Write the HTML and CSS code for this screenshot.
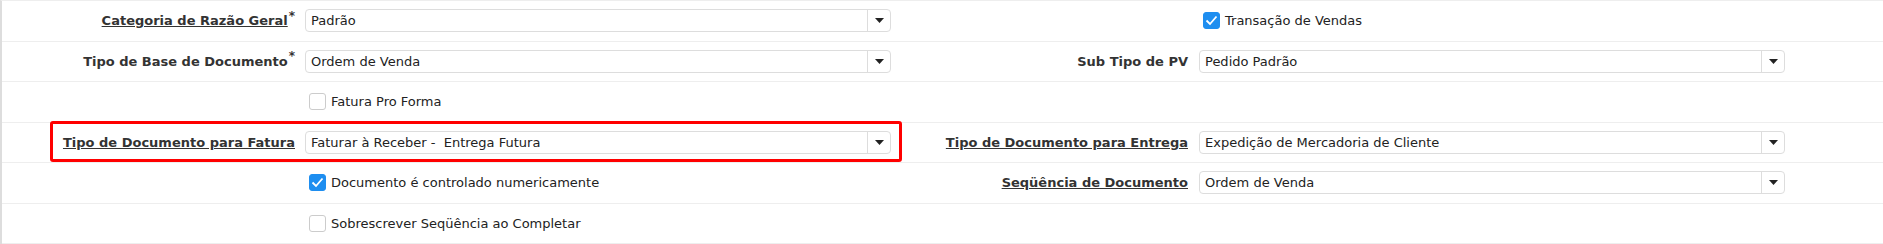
FILE: index.html
```html
<!DOCTYPE html>
<html lang="pt">

<head>
    <meta charset="UTF-8">
    <meta name="viewport" content="width=device-width, initial-scale=1.0">
    <title>Tipo de Documento de Vendas</title>
    <link rel="stylesheet" href="styles.css">
</head>

<body>
    <div class="form">
        <!-- linha 1 -->
        <div class="row">
            <div class="lbl"><span class="link">Categoria de Razão Geral</span><sup>*</sup></div>
            <div class="field">
                <div class="select"><span class="value">Padrão</span><span class="btn"><svg width="9" height="5" viewBox="0 0 9 5"><path d="M0 0h9L4.5 5z" fill="#222"/></svg></span></div>
            </div>
            <div class="lbl"></div>
            <div class="field">
                <label class="check"><span class="box on"><svg width="13" height="11" viewBox="0 0 13 11"><path d="M1.5 5.5l3.5 3.5 6.5-7.5" fill="none" stroke="#fff" stroke-width="1.8"/></svg></span>Transação de Vendas</label>
            </div>
        </div>

        <!-- linha 2 -->
        <div class="row">
            <div class="lbl">Tipo de Base de Documento<sup>*</sup></div>
            <div class="field">
                <div class="select"><span class="value">Ordem de Venda</span><span class="btn"><svg width="9" height="5" viewBox="0 0 9 5"><path d="M0 0h9L4.5 5z" fill="#222"/></svg></span></div>
            </div>
            <div class="lbl lbl-right">Sub Tipo de PV</div>
            <div class="field">
                <div class="select"><span class="value">Pedido Padrão</span><span class="btn"><svg width="9" height="5" viewBox="0 0 9 5"><path d="M0 0h9L4.5 5z" fill="#222"/></svg></span></div>
            </div>
        </div>

        <!-- linha 3 -->
        <div class="row">
            <div class="lbl"></div>
            <div class="field">
                <label class="check"><span class="box"></span>Fatura Pro Forma</label>
            </div>
            <div class="lbl"></div>
            <div class="field"></div>
        </div>

        <!-- linha 4 (destacada) -->
        <div class="row marked">
            <div class="highlight"></div>
            <div class="lbl"><span class="link">Tipo de Documento para Fatura</span></div>
            <div class="field">
                <div class="select"><span class="value">Faturar à Receber -&nbsp; Entrega Futura</span><span class="btn"><svg width="9" height="5" viewBox="0 0 9 5"><path d="M0 0h9L4.5 5z" fill="#222"/></svg></span></div>
            </div>
            <div class="lbl lbl-right"><span class="link">Tipo de Documento para Entrega</span></div>
            <div class="field">
                <div class="select"><span class="value">Expedição de Mercadoria de Cliente</span><span class="btn"><svg width="9" height="5" viewBox="0 0 9 5"><path d="M0 0h9L4.5 5z" fill="#222"/></svg></span></div>
            </div>
        </div>

        <!-- linha 5 -->
        <div class="row">
            <div class="lbl"></div>
            <div class="field">
                <label class="check"><span class="box on"><svg width="13" height="11" viewBox="0 0 13 11"><path d="M1.5 5.5l3.5 3.5 6.5-7.5" fill="none" stroke="#fff" stroke-width="1.8"/></svg></span>Documento é controlado numericamente</label>
            </div>
            <div class="lbl lbl-right"><span class="link">Seqüência de Documento</span></div>
            <div class="field">
                <div class="select"><span class="value">Ordem de Venda</span><span class="btn"><svg width="9" height="5" viewBox="0 0 9 5"><path d="M0 0h9L4.5 5z" fill="#222"/></svg></span></div>
            </div>
        </div>

        <!-- linha 6 -->
        <div class="row">
            <div class="lbl"></div>
            <div class="field">
                <label class="check"><span class="box"></span>Sobrescrever Seqüência ao Completar</label>
            </div>
            <div class="lbl"></div>
            <div class="field"></div>
        </div>
    </div>
</body>

</html>
```

FILE: styles.css
```css
body {
    margin: 0;
    padding: 0;
    background-color: #fff;
    font-family: "DejaVu Sans", Verdana, sans-serif;
    font-size: 13px;
    color: #333;
}

.form {
    border-left: 2px solid #ddd;
    border-top: 1px solid #eee;
}

.row {
    position: relative;
    display: grid;
    grid-template-columns: 303px 586px 308px 586px 1fr;
    align-items: center;
    min-height: 39.5px;
    border-bottom: 1px solid #eee;
}

.lbl {
    font-weight: bold;
    text-align: right;
    padding-right: 10px;
    white-space: nowrap;
}

.lbl-right {
    padding-right: 11px;
}

.lbl .link {
    text-decoration: underline;
}

.lbl sup {
    font-size: 12px;
    line-height: 0;
    margin-left: 1px;
}

.select {
    display: flex;
    align-items: stretch;
    height: 21px;
    border: 1px solid #ddd;
    border-radius: 4px;
    background-color: #fff;
}

.select .value {
    flex: 1;
    padding-left: 5px;
    line-height: 21px;
    color: #222;
    white-space: nowrap;
    overflow: hidden;
}

.select .btn {
    width: 22px;
    border-left: 1px solid #ddd;
    display: flex;
    align-items: center;
    justify-content: center;
}

.check {
    display: flex;
    align-items: center;
    gap: 5px;
    margin-left: 4px;
    color: #222;
}

.box {
    width: 15px;
    height: 15px;
    border: 1px solid #ccc;
    border-radius: 3px;
    background-color: #fff;
    display: flex;
    align-items: center;
    justify-content: center;
}

.box.on {
    background-color: #1e8ef0;
    border-color: #1e8ef0;
}

/* caixa de destaque vermelha sobre a linha */
.highlight {
    position: absolute;
    left: 48px;
    top: -2px;
    width: 846px;
    height: 35px;
    border: 3px solid #f00;
    border-radius: 3px;
    pointer-events: none;
}
```
